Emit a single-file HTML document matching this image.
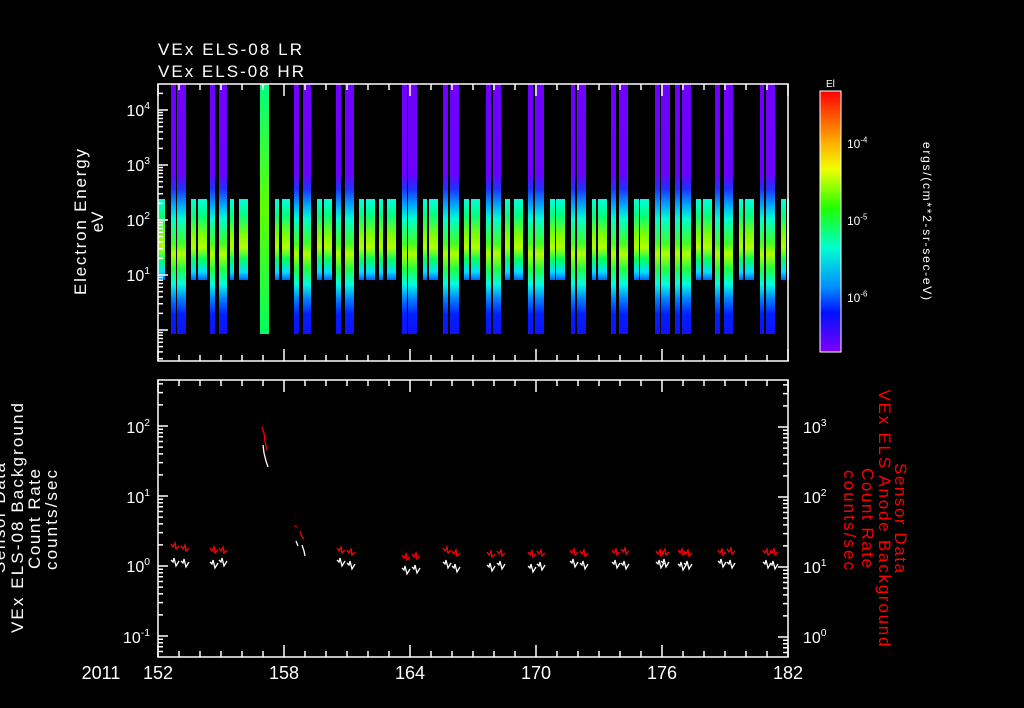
<!DOCTYPE html>
<html><head><meta charset="utf-8"><style>
html,body{margin:0;padding:0;background:#000;width:1024px;height:708px;overflow:hidden}
svg{display:block}
text{font-family:"Liberation Sans",sans-serif;fill:#fff}
</style></head><body>
<svg id="s" width="1024" height="708" viewBox="0 0 1024 708" xmlns="http://www.w3.org/2000/svg">
<defs>
<linearGradient id="tall" x1="0" y1="84" x2="0" y2="334" gradientUnits="userSpaceOnUse">
<stop offset="0" stop-color="#7000ff"/><stop offset="0.36" stop-color="#6a00ff"/>
<stop offset="0.42" stop-color="#2030ff"/><stop offset="0.48" stop-color="#00a0ff"/>
<stop offset="0.54" stop-color="#00ffd0"/><stop offset="0.64" stop-color="#40ff20"/>
<stop offset="0.68" stop-color="#b0ff00"/><stop offset="0.74" stop-color="#20ff40"/>
<stop offset="0.8" stop-color="#00ffe0"/><stop offset="0.86" stop-color="#0080ff"/>
<stop offset="0.92" stop-color="#0020ff"/><stop offset="1" stop-color="#1010ff"/>
</linearGradient>
<linearGradient id="mid" x1="0" y1="199" x2="0" y2="280" gradientUnits="userSpaceOnUse">
<stop offset="0" stop-color="#00ffe0"/><stop offset="0.2" stop-color="#00ff80"/>
<stop offset="0.45" stop-color="#80ff00"/><stop offset="0.6" stop-color="#b0ff00"/>
<stop offset="0.75" stop-color="#00ff60"/><stop offset="0.9" stop-color="#00e0ff"/>
<stop offset="1" stop-color="#0060ff"/>
</linearGradient>
<linearGradient id="grn" x1="0" y1="84" x2="0" y2="334" gradientUnits="userSpaceOnUse">
<stop offset="0" stop-color="#00ff80"/><stop offset="0.5" stop-color="#60ff00"/><stop offset="1" stop-color="#00ff60"/>
</linearGradient>
<linearGradient id="cb" x1="0" y1="0" x2="0" y2="1">
<stop offset="0" stop-color="#ff0000"/><stop offset="0.2" stop-color="#ffb000"/>
<stop offset="0.3" stop-color="#f0ff00"/><stop offset="0.45" stop-color="#20ff00"/>
<stop offset="0.6" stop-color="#00ffd0"/><stop offset="0.75" stop-color="#0090ff"/>
<stop offset="0.85" stop-color="#0010ff"/><stop offset="1" stop-color="#8000ff"/>
</linearGradient>
</defs>
<g id="bars"></g>
<g id="axes" stroke="#fff" stroke-width="1.5" fill="none"></g>
<g id="data" fill="none" stroke-width="1.3"></g>
<text x="158" y="55" font-size="17" textLength="144">VEx ELS-08 LR</text>
<text x="158" y="77" font-size="17" textLength="146">VEx ELS-08 HR</text>
<g font-size="17" text-anchor="middle">
<text transform="translate(86,222) rotate(-90)" textLength="146">Electron Energy</text>
<text transform="translate(103,222) rotate(-90)">eV</text>
<text transform="translate(5,518) rotate(-90)" textLength="110">Sensor Data</text>
<text transform="translate(23,518) rotate(-90)" textLength="230">VEx ELS-08 Background</text>
<text transform="translate(40,519) rotate(-90)" textLength="100">Count Rate</text>
<text transform="translate(57,520) rotate(-90)" textLength="100">counts/sec</text>
</g>
<g font-size="17" text-anchor="middle">
<text transform="translate(895,518) rotate(90)" style="fill:#f00" textLength="110">Sensor Data</text>
<text transform="translate(879,518) rotate(90)" style="fill:#f00" textLength="257">VEx ELS Anode Background</text>
<text transform="translate(862,518) rotate(90)" style="fill:#f00" textLength="100">Count Rate</text>
<text transform="translate(844,520) rotate(90)" style="fill:#f00" textLength="100">counts/sec</text>
</g>
<text transform="translate(923,221) rotate(90)" font-size="12" text-anchor="middle" textLength="158">ergs/(cm**2-sr-sec-eV)</text>
<text x="826" y="87" font-size="10">El</text>
<rect x="820" y="91" width="21" height="261" fill="url(#cb)" stroke="#fff" stroke-width="1"/>
<g id="lbl" font-size="16"></g>
</svg>
<script>
var NS="http://www.w3.org/2000/svg";
function el(p,t,a,txt){var e=document.createElementNS(NS,t);for(var k in a)e.setAttribute(k,a[k]);if(txt!=null)e.textContent=txt;document.getElementById(p).appendChild(e);return e;}
var tall=[[171,175],[177,185],[210,214],[219,226],[294,298],[303,310],[336,340],[345,353],[402,406],[408,416],[443,447],[450,458],[486,490],[493,500],[528,532],[535,543],[571,574],[577,585],[611,615],[619,627],[655,659],[661,669],[675,679],[682,690],[715,719],[724,732],[760,763],[766,774]];
var mid=[[158,164],[191,195],[198,206],[230,233],[239,247],[275,278],[282,289],[317,321],[324,331],[359,363],[366,374],[379,382],[387,395],[423,426],[429,437],[464,468],[471,479],[505,509],[514,522],[550,554],[556,564],[592,595],[598,606],[634,638],[640,648],[696,700],[703,711],[739,742],[745,753],[781,785],[787,788]];
tall.forEach(function(b){el("bars","rect",{x:b[0],y:84,width:b[1]-b[0]+1,height:250,fill:"url(#tall)"});});
mid.forEach(function(b){el("bars","rect",{x:b[0],y:199,width:b[1]-b[0]+1,height:81,fill:"url(#mid)"});});
el("bars","rect",{x:260,y:84,width:9,height:250,fill:"url(#grn)"});
el("axes","rect",{x:158,y:84,width:630,height:277});
el("axes","rect",{x:158,y:380,width:630,height:277});
var d="";
function xt(y0,y1){for(var i=0;i<=30;i++){var x=158+i*21,L=(i%6==0)?12:6;d+="M"+x+" "+y0+"v"+L+"M"+x+" "+y1+"v-"+L;}}
xt(84,361);xt(380,657);
function yt(x,dir,top,bot,base,dec){
 for(var k=-3;k<8;k++){for(var m=1;m<10;m++){var y=base-dec*(k+Math.log10(m));if(y<top+1||y>bot-1)continue;var L=(m==1)?10:5;d+="M"+x+" "+y.toFixed(1)+"h"+(dir*L);}}
}
yt(158,1,84,361,330,55);
yt(158,1,380,657,566,70);
yt(788,-1,380,657,637,70);
for(var k=-7;k<-3;k++){for(var m=1;m<10;m++){var y=297-77*(k+6+Math.log10(m));if(y<92||y>351)continue;d+="M841 "+y.toFixed(1)+"h"+(m==1?-8:-5);}}
el("axes","path",{d:d});
function pw(x,y,b,e,anch,fs){fs=fs||16;var t=el("lbl","text",{x:x,y:y,"font-size":fs,"text-anchor":anch||"end"});var s1=document.createElementNS(NS,"tspan");s1.textContent=b;t.appendChild(s1);var s2=document.createElementNS(NS,"tspan");s2.setAttribute("dy",-fs*0.45);s2.setAttribute("font-size",fs*0.65);s2.textContent=e;t.appendChild(s2);}
[[4,110],[3,165],[2,220],[1,275]].forEach(function(a){pw(150,a[1]+6,"10",a[0]);});
[[2,427],[1,497],[0,566],["-1",637]].forEach(function(a){pw(150,a[1]+6,"10",a[0]);});
[[3,427],[2,497],[1,567],[0,637]].forEach(function(a){pw(803,a[1]+6,"10",a[0],"start");});
[["-4",143],["-5",220],["-6",297]].forEach(function(a){pw(847,a[1]+5,"10",a[0],"start",12);});
["152","158","164","170","176","182"].forEach(function(s,i){el("lbl","text",{x:158+i*126,y:679,"text-anchor":"middle","font-size":18},s);});
el("lbl","text",{x:101,y:679,"text-anchor":"middle","font-size":18},"2011");
function sq(x,yr,yw){el("data","path",{d:"M"+x+" "+yr+"l2 3l2 -4l1 6l3 -3",stroke:"#f00"});el("data","path",{d:"M"+x+" "+yw+"l2 2l1 -4l2 8l3 -5",stroke:"#fff"});}
[[171,544,560],[181,546,561],[210,548,562],[219,548,560],[337,548,560],[347,550,563],[402,555,568],[412,554,567],[443,548,562],[452,551,566],[487,552,565],[497,551,563],[528,552,566],[537,551,564],[570,550,561],[580,551,563],[612,550,562],[621,549,563],[656,551,562],[661,550,561],[678,550,564],[684,551,563],[718,550,561],[727,549,562],[763,550,562],[770,550,563]].forEach(function(a){sq(a[0],a[1],a[2]);});
el("data","path",{d:"M262 427l2 6l1 8l2 9",stroke:"#f00"});
el("data","path",{d:"M263 445l1 8l2 8l2 6",stroke:"#fff"});
el("data","path",{d:"M295 526l2 1M300 531l2 6l2 2",stroke:"#f00"});
el("data","path",{d:"M296 541l2 5M302 545l2 6l1 5",stroke:"#fff"});
</script>
</body></html>
